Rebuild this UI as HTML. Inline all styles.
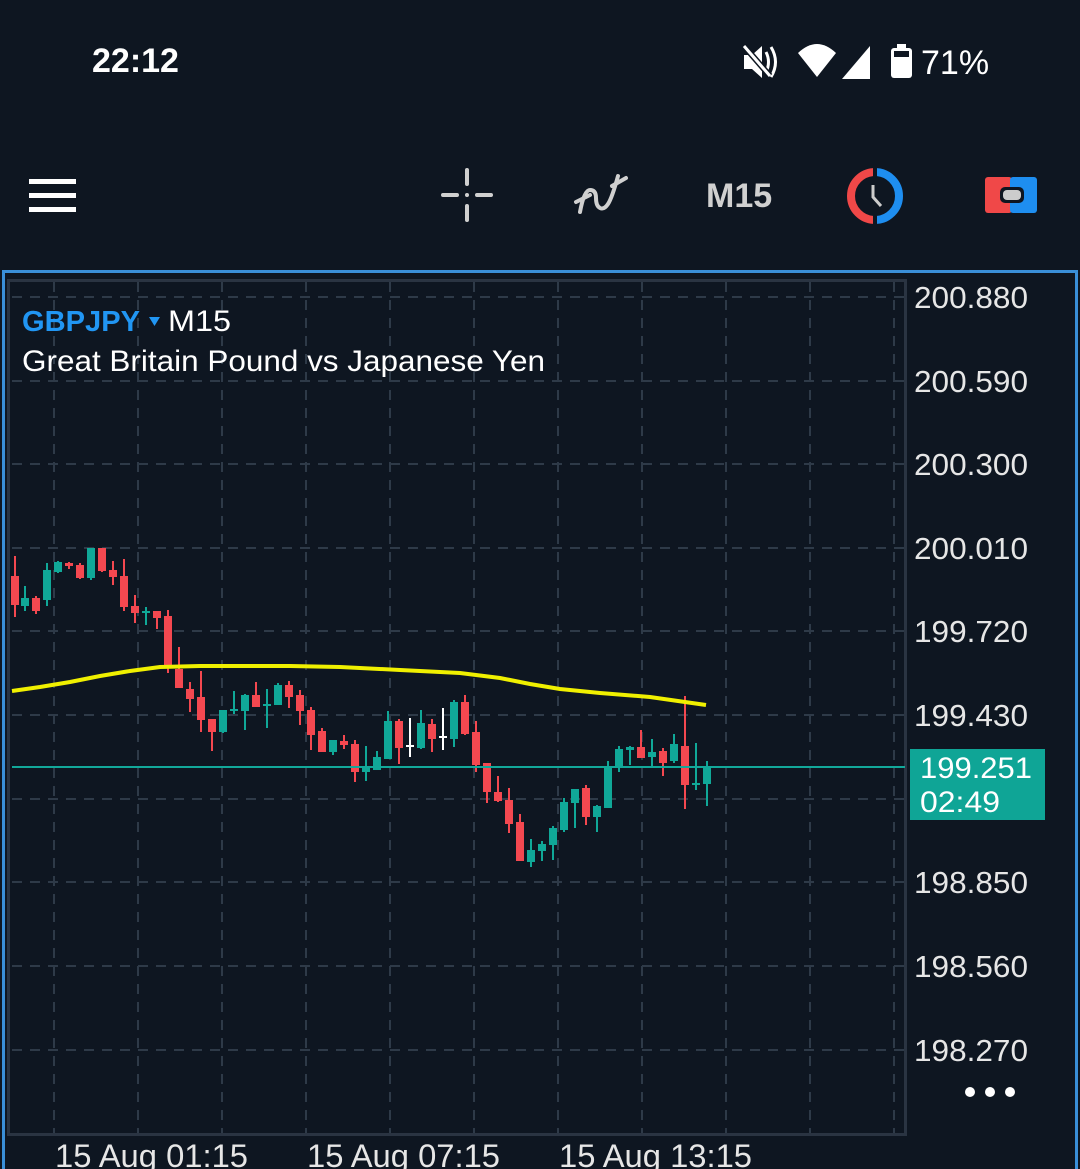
<!DOCTYPE html>
<html><head><meta charset="utf-8"><style>
html,body{margin:0;padding:0;background:#0e1621;width:1080px;height:1169px;overflow:hidden;font-family:"Liberation Sans",sans-serif}
.t{position:absolute;color:#fff;white-space:nowrap}
</style></head><body>
<div class="t" style="left:92px;top:42px;font-size:34px;font-weight:bold;letter-spacing:0px">22:12</div>
<svg width="1080" height="1169" style="position:absolute;left:0;top:0" id="s">
<defs>
<clipPath id="cl"><rect x="840" y="160" width="33" height="70"/></clipPath>
<clipPath id="cr"><rect x="877" y="160" width="40" height="70"/></clipPath>
</defs>
<!-- status icons -->
<g fill="#fff">
<path d="M744 55h8l10-9v32l-10-9h-8z"/>
<path d="M766 52q5 10 0 20M771 47q9 15 0 30" stroke="#fff" stroke-width="3" fill="none"/>
<path d="M744 46l26 30" stroke="#0e1621" stroke-width="6"/>
<path d="M744 46l26 30" stroke="#fff" stroke-width="3"/>
<path d="M798 53q19-18 38 0l-19 24z"/>
<path d="M870 46v33h-28z"/>
<rect x="891" y="48" width="21" height="30" rx="3"/><rect x="897" y="44" width="9" height="5"/>
</g>
<rect x="894" y="51" width="15" height="6" fill="#0e1621"/>
<text x="921" y="74" fill="#fff" font-size="34" font-family="Liberation Sans">71%</text>
<!-- toolbar -->
<g fill="#fff"><rect x="29" y="179" width="47" height="5"/><rect x="29" y="193" width="47" height="5"/><rect x="29" y="207" width="47" height="5"/></g>
<g stroke="#d0d0d0" stroke-width="4" stroke-linecap="round" fill="none">
<path d="M467 170v14M467 206v14M443 195h14M477 195h14"/>
<path d="M580 212q4-22 10-22t6 8 4 10 8-4 10-28"/>
<path d="M576 202l14-7M612 186l14-8"/>
</g>
<circle cx="467" cy="195" r="2" fill="#d0d0d0"/>
<text x="706" y="207" fill="#d0d0d0" font-size="34" font-weight="bold">M15</text>
<circle cx="875" cy="196" r="24" stroke="#f04848" stroke-width="8" fill="none" clip-path="url(#cl)"/>
<circle cx="875" cy="196" r="24" stroke="#1e8ef0" stroke-width="8" fill="none" clip-path="url(#cr)"/>
<path d="M873 185v12l8 9" stroke="#ccc" stroke-width="3" fill="none"/>
<rect x="985" y="177" width="27" height="36" rx="3" fill="#f04848"/>
<rect x="1010" y="177" width="27" height="36" rx="3" fill="#1e8ef0"/>
<rect x="1000" y="187" width="24" height="16" rx="5" fill="#0e1621"/>
<rect x="1003" y="190" width="18" height="10" rx="4" fill="#ccc"/>
<!-- chart frame -->
<rect x="3.5" y="271.5" width="1073" height="910" fill="none" stroke="#3a8fd8" stroke-width="3"/>
<rect x="8.5" y="280.5" width="897" height="854" fill="none" stroke="#2a3442" stroke-width="3"/>
<g id="grid" stroke="#2e3a48" stroke-width="2" stroke-dasharray="10 8"></g>
<g id="c"></g>
<polyline points="12,691 40,687 70,682 100,676 130,671 160,667 200,666 290,666 340,667 400,670 460,673 500,678 530,684 560,689 600,693 650,697 706,705" fill="none" stroke="#f0f000" stroke-width="4"/>
<line x1="12" y1="767" x2="905" y2="767" stroke="#12a89a" stroke-width="2"/>
<rect x="910" y="749" width="135" height="71" fill="#0fa596"/>
<text x="920" y="778" fill="#fff" font-size="30" textLength="112" lengthAdjust="spacingAndGlyphs">199.251</text>
<text x="920" y="812" fill="#fff" font-size="30" textLength="80" lengthAdjust="spacingAndGlyphs">02:49</text>
<g fill="#e6e6e6" font-size="31" id="pl"></g>
<circle cx="970" cy="1092" r="5" fill="#fff"/><circle cx="990" cy="1092" r="5" fill="#fff"/><circle cx="1010" cy="1092" r="5" fill="#fff"/>
<g fill="#e6e6e6" font-size="32"><text x="55" y="1167" textLength="193" lengthAdjust="spacingAndGlyphs">15 Aug 01:15</text><text x="307" y="1167" textLength="193" lengthAdjust="spacingAndGlyphs">15 Aug 07:15</text><text x="559" y="1167" textLength="193" lengthAdjust="spacingAndGlyphs">15 Aug 13:15</text></g>
<text x="22" y="331" fill="#2196f3" font-size="29" font-weight="bold" textLength="118" lengthAdjust="spacingAndGlyphs">GBPJPY</text>
<path d="M149 317h11l-5.5 9z" fill="#2196f3"/>
<text x="168" y="331" fill="#fff" font-size="30" textLength="63" lengthAdjust="spacingAndGlyphs">M15</text>
<text x="22" y="371" fill="#fff" font-size="30" textLength="523" lengthAdjust="spacingAndGlyphs">Great Britain Pound vs Japanese Yen</text>
</svg>
<script>
var ns="http://www.w3.org/2000/svg";
function el(p,t,a){var e=document.createElementNS(ns,t);for(var k in a)e.setAttribute(k,a[k]);p.appendChild(e);return e;}
var g=document.getElementById('grid');
for(var i=0;i<11;i++){var x=54+i*84;el(g,'line',{x1:x,y1:282,x2:x,y2:1133});}
var ys=[297,381,464,548,631,715,799,882,966,1050];
for(var i=0;i<ys.length;i++)el(g,'line',{x1:12,y1:ys[i],x2:904,y2:ys[i]});
var pl=document.getElementById('pl'),lab=["200.880","200.590","200.300","200.010","199.720","199.430","199.140","198.850","198.560","198.270"];
for(var i=0;i<ys.length;i++){if(i==6)continue;var t=el(pl,'text',{x:914,y:ys[i]+11,textLength:114,lengthAdjust:'spacingAndGlyphs'});t.textContent=lab[i];}
var R="#f44850",G="#10a898",W="#fff";
var d=[[15,R,576,605,556,617],[25,G,598,606,586,611],[36,R,598,611,596,614],[47,G,570,600,563,606],[58,G,562,572,561,573],[69,R,563,566,562,569],[80,R,565,578,563,579],[91,G,548,578,548,580],[102,R,548,571,548,572],[113,R,570,577,561,585],[124,R,576,607,559,611],[135,R,606,613,595,623],[146,G,611,612,607,625],[157,R,611,618,611,629],[168,R,616,667,610,673],[179,R,669,688,647,688],[190,R,689,699,682,712],[201,R,697,720,671,732],[212,R,719,732,719,751],[223,G,710,732,710,733],[234,G,709,711,691,714],[245,G,695,711,694,730],[256,R,695,707,682,707],[267,G,704,706,689,728],[278,G,685,705,683,705],[289,R,685,697,681,708],[300,R,695,711,690,725],[311,R,710,735,707,750],[322,R,731,752,728,752],[333,G,740,752,740,755],[344,R,741,745,735,749],[355,R,744,772,740,782],[366,G,767,772,746,781],[377,G,757,770,751,770],[388,G,721,759,711,759],[399,R,721,748,719,764],[410,W,745,747,718,757],[421,G,723,748,710,749],[432,R,724,739,719,752],[443,W,736,738,708,750],[454,G,702,739,700,747],[465,R,702,734,695,735],[476,R,732,765,721,772],[487,R,763,792,763,803],[498,R,792,801,776,802],[509,R,800,824,788,833],[520,R,822,861,814,861],[531,G,850,862,839,867],[542,G,844,851,841,861],[553,G,828,845,826,860],[564,G,802,830,798,832],[575,G,789,803,789,828],[586,R,788,817,785,825],[597,G,806,817,805,832],[608,G,766,808,761,808],[619,G,749,768,746,772],[630,G,747,750,746,765],[641,R,747,758,730,758],[652,G,752,757,739,768],[663,R,751,763,748,776],[674,G,744,761,734,763],[685,R,746,785,696,809],[696,G,783,785,743,790],[707,G,766,784,761,806]];
var c=document.getElementById('c');
d.forEach(function(a){el(c,'rect',{x:a[0]-1,y:a[4],width:2,height:a[5]-a[4],fill:a[1]});el(c,'rect',{x:a[0]-4,y:a[2],width:8,height:Math.max(2,a[3]-a[2]),fill:a[1]});});
</script>
</body></html>
